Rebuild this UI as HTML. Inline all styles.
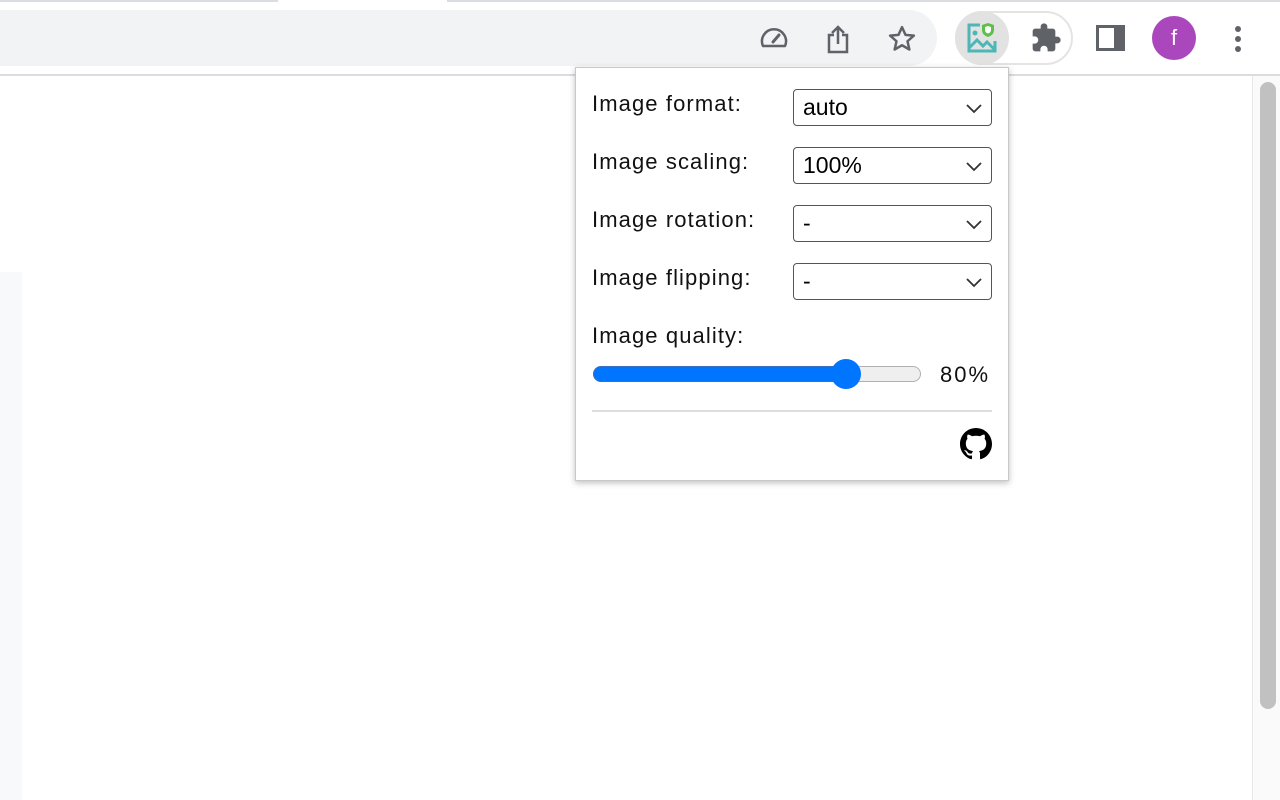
<!DOCTYPE html>
<html><head><style>
*{margin:0;padding:0;box-sizing:border-box}
body{width:1280px;height:800px;position:relative;background:#fff;overflow:hidden;font-family:"Liberation Sans",Helvetica,sans-serif}
.abs{position:absolute}
.lbl{position:absolute;left:592px;font-size:22px;letter-spacing:1.1px;color:#111}
.sel{position:absolute;left:793px;width:199px;height:37px;border:1.5px solid #555;border-radius:4px;font-size:23px;padding-left:9px;line-height:34px;color:#000}
.sel svg{position:absolute;right:8px;top:12px}
</style></head><body>
<div class="abs" style="left:0;top:0;width:278px;height:2px;background:#dadce0"></div>
<div class="abs" style="left:447px;top:0;width:833px;height:2px;background:#dadce0"></div>
<div class="abs" style="left:-40px;top:10px;width:977px;height:56px;background:#f1f3f4;border-radius:28px"></div>
<div class="abs" style="left:0;top:74px;width:1280px;height:2px;background:#dadce0"></div>
<svg class="abs" style="left:758px;top:26px" width="32" height="26" viewBox="0 0 32 26"><path d="M5 20 A12 12 0 1 1 27 20 Z" fill="none" stroke="#5f6368" stroke-width="2.5" stroke-linejoin="round"/><path d="M15 16 L21 9" stroke="#5f6368" stroke-width="3" stroke-linecap="round"/></svg>
<svg class="abs" style="left:826px;top:24px" width="26" height="30" viewBox="0 0 26 30"><path d="M8 11H3v17h18V11h-5" fill="none" stroke="#5f6368" stroke-width="2.5"/><path d="M12 20V3M6 9l6-6 6 6" fill="none" stroke="#5f6368" stroke-width="2.5"/></svg>
<svg class="abs" style="left:886px;top:24px" width="32" height="30" viewBox="0 0 24 24"><path d="M12 2.5l2.8 6.2 6.7.6-5.1 4.5 1.5 6.6L12 17l-5.9 3.4 1.5-6.6-5.1-4.5 6.7-.6z" fill="none" stroke="#5f6368" stroke-width="2" stroke-linejoin="round"/></svg>
<div class="abs" style="left:955px;top:11px;width:118px;height:54px;border:2px solid #e4e4e4;border-radius:27px"></div>
<div class="abs" style="left:955px;top:11px;width:54px;height:54px;border-radius:50%;background:#e2e2e2"></div>
<svg class="abs" style="left:964px;top:20px" width="36" height="36" viewBox="0 0 36 36"><path d="M16 5H5v26h26V21" fill="none" stroke="#4db6b6" stroke-width="3"/><path d="M5 28l8-8 6 6 4-4 8 8" fill="none" stroke="#4db6b6" stroke-width="3"/><circle cx="11" cy="13" r="2.5" fill="#4db6b6"/><path d="M24 3l6 2v5c0 4-3 6-6 7-3-1-6-3-6-7V5z" fill="#5cc04a"/><path d="M24 6l3 1v3c0 2-1.5 3-3 3.5-1.5-.5-3-1.5-3-3.5V7z" fill="#fff"/></svg>
<svg class="abs" style="left:1030px;top:22px" width="32" height="32" viewBox="0 0 24 24"><path d="M20.5 11H19V7c0-1.1-.9-2-2-2h-4V3.5a2.5 2.5 0 0 0-5 0V5H4c-1.1 0-2 .9-2 2v3.8h1.5c1.5 0 2.7 1.2 2.7 2.7S5 16.200 3.5 16.2H2V20c0 1.1.9 2 2 2h3.8v-1.5c0-1.5 1.2-2.7 2.7-2.7s2.7 1.2 2.7 2.7V22H17c1.1 0 2-.9 2-2v-4h1.5a2.5 2.5 0 0 0 0-5z" fill="#5f6368"/></svg>
<div class="abs" style="left:1096px;top:25px;width:29px;height:26px;border:3px solid #5f6368;border-right:11px solid #5f6368"></div>
<div class="abs" style="left:1152px;top:16px;width:44px;height:44px;border-radius:50%;background:#ab47bc;color:#fff;font-size:22px;text-align:center;line-height:44px">f</div>
<div class="abs" style="left:1235px;top:26px;width:6px;height:6px;border-radius:50%;background:#5f6368"></div>
<div class="abs" style="left:1235px;top:36px;width:6px;height:6px;border-radius:50%;background:#5f6368"></div>
<div class="abs" style="left:1235px;top:46px;width:6px;height:6px;border-radius:50%;background:#5f6368"></div>
<div class="abs" style="left:0;top:272px;width:22px;height:528px;background:#f8f9fb"></div>
<div class="abs" style="left:1252px;top:76px;width:28px;height:724px;background:#fafafa;border-left:1px solid #e8e8e8"></div>
<div class="abs" style="left:1260px;top:82px;width:16px;height:627px;background:#c1c1c1;border-radius:8px"></div>
<div class="abs" style="left:575px;top:67px;width:434px;height:414px;background:#fff;border:1px solid #c8c8c8;box-shadow:0 2px 6px rgba(0,0,0,.25)"></div>
<div class="lbl" style="top:91px">Image format:</div>
<div class="sel" style="top:89px">auto<svg width="18" height="12" viewBox="0 0 18 12"><path d="M2 3l7 7 7-7" fill="none" stroke="#333" stroke-width="1.8"/></svg></div>
<div class="lbl" style="top:149px">Image scaling:</div>
<div class="sel" style="top:147px">100%<svg width="18" height="12" viewBox="0 0 18 12"><path d="M2 3l7 7 7-7" fill="none" stroke="#333" stroke-width="1.8"/></svg></div>
<div class="lbl" style="top:207px">Image rotation:</div>
<div class="sel" style="top:205px">-<svg width="18" height="12" viewBox="0 0 18 12"><path d="M2 3l7 7 7-7" fill="none" stroke="#333" stroke-width="1.8"/></svg></div>
<div class="lbl" style="top:265px">Image flipping:</div>
<div class="sel" style="top:263px">-<svg width="18" height="12" viewBox="0 0 18 12"><path d="M2 3l7 7 7-7" fill="none" stroke="#333" stroke-width="1.8"/></svg></div>
<div class="lbl" style="top:323px">Image quality:</div>
<div class="abs" style="left:593px;top:366px;width:328px;height:16px;border-radius:8px;background:#efefef;border:1px solid #b0b0b0"></div>
<div class="abs" style="left:593px;top:366px;width:256px;height:16px;border-radius:8px;background:#0075ff;border:1px solid #3a6fc0"></div>
<div class="abs" style="left:831px;top:359px;width:30px;height:30px;border-radius:50%;background:#0075ff"></div>
<div class="abs" style="left:940px;top:362px;font-size:22px;letter-spacing:2px;color:#111">80%</div>
<div class="abs" style="left:592px;top:410px;width:400px;height:2px;background:#ddd"></div>
<svg class="abs" style="left:960px;top:428px" width="32" height="32" viewBox="0 0 16 16"><path d="M8 0C3.58 0 0 3.580 0 8c0 3.54 2.290 6.53 5.470 7.590.4.07.55-.17.55-.38 0-.19-.01-.82-.01-1.490-2.010.37-2.530-.49-2.690-.94-.09-.23-.48-.94-.82-1.130-.28-.15-.68-.52-.01-.53.63-.01 1.080.58 1.230.82.72 1.210 1.870.87 2.330.66.07-.52.28-.87.51-1.070-1.780-.2-3.640-.89-3.640-3.950 0-.87.31-1.590.82-2.150-.08-.2-.36-1.020.08-2.120 0 0 .67-.21 2.200.82.64-.18 1.320-.27 2-.27.68 0 1.360.09 2 .27 1.530-1.040 2.200-.82 2.200-.82.44 1.100.16 1.920.08 2.120.51.56.82 1.270.82 2.150 0 3.070-1.870 3.750-3.650 3.950.29.25.54.73.54 1.480 0 1.070-.01 1.930-.01 2.200 0 .21.15.46.55.38A8.013 8.013 0 0016 8c0-4.420-3.580-8-8-8z" fill="#000"/></svg>
</body></html>
